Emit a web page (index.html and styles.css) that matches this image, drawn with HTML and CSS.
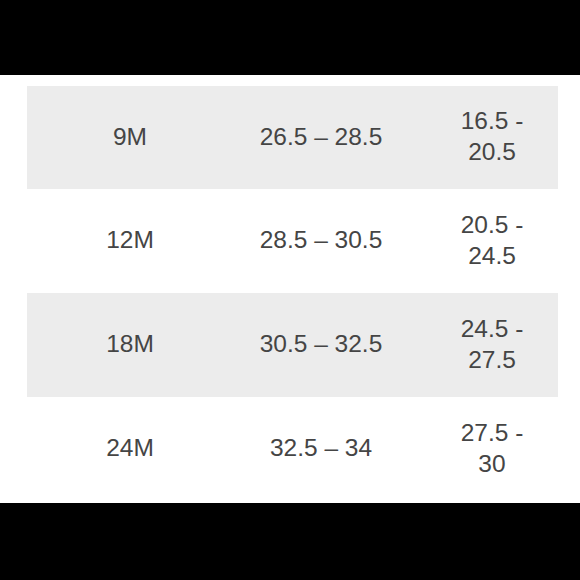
FILE: index.html
```html
<!DOCTYPE html>
<html>
<head>
<meta charset="utf-8">
<link rel="stylesheet" href="styles.css">
</head>
<body>
<div class="band-top"></div>
<main class="sheet">
  <div class="size-table">
    <div class="row shaded first">
      <div class="cell c1">9M</div>
      <div class="cell c2">26.5 – 28.5</div>
      <div class="cell c3">16.5 - 20.5</div>
    </div>
    <div class="row">
      <div class="cell c1">12M</div>
      <div class="cell c2">28.5 – 30.5</div>
      <div class="cell c3">20.5 - 24.5</div>
    </div>
    <div class="row shaded">
      <div class="cell c1">18M</div>
      <div class="cell c2">30.5 – 32.5</div>
      <div class="cell c3">24.5 - 27.5</div>
    </div>
    <div class="row">
      <div class="cell c1">24M</div>
      <div class="cell c2">32.5 – 34</div>
      <div class="cell c3">27.5 - 30</div>
    </div>
  </div>
</main>
<div class="band-bottom"></div>
</body>
</html>
```
FILE: styles.css
```css
html, body {
  margin: 0;
  padding: 0;
  background: #000;
}
body {
  width: 580px;
  height: 580px;
  overflow: hidden;
  font-family: "Liberation Sans", Arial, Helvetica, sans-serif;
  display: flex;
  flex-direction: column;
}
.band-top {
  height: 75px;
  background: #000;
}
.sheet {
  background: #fff;
  padding: 11px 22px 2px 27px;
}
.size-table {
  display: flex;
  flex-direction: column;
}
.row {
  display: grid;
  grid-template-columns: 206px 176px 149px;
  height: 104px;
  box-sizing: border-box;
  padding-bottom: 3px;
  align-items: center;
  background: #fff;
}
.row.first {
  height: 103px;
}
.row.shaded {
  background: #ececec;
}
.cell {
  color: #454545;
  font-size: 24.5px;
  line-height: 31px;
  text-align: center;
}
.c3 {
  padding: 0 26px 0 43px;
}
.band-bottom {
  flex: 1;
  background: #000;
}
```
